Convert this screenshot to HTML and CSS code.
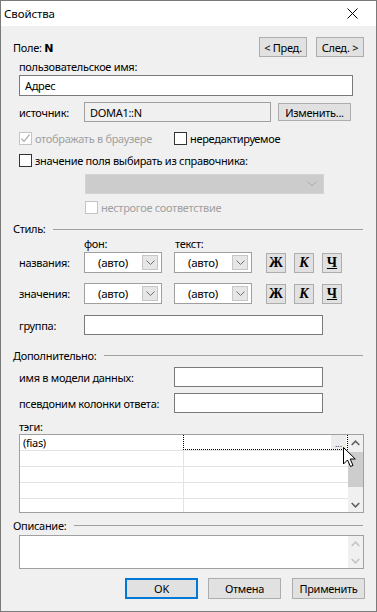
FILE: index.html
```html
<!DOCTYPE html>
<html lang="ru">

<head>
    <meta charset="UTF-8">
    <title>Свойства</title>
    <link rel="stylesheet" href="styles.css">
</head>

<body>
    <div class="window">
        <div class="titlebar">
            <span class="title">Свойства</span>
            <svg class="close" width="11" height="11" viewBox="0 0 11 11">
                <path d="M0.5 0.5 L10.5 10.5 M10.5 0.5 L0.5 10.5" stroke="#000" stroke-width="1" fill="none" />
            </svg>
        </div>

        <div class="content">
            <!-- верхняя строка: имя поля и навигация -->
            <div class="field-row">
                <span>Поле: <b class="field-name">N</b></span>
                <span class="nav">
                    <span class="btn nav-btn">&lt; Пред.</span>
                    <span class="btn nav-btn">След. &gt;</span>
                </span>
            </div>

            <div class="lbl-row indent">пользовательское имя:</div>
            <div class="edit name-edit">Адрес</div>

            <div class="src-row indent">
                <span class="lbl">источник:</span>
                <span class="edit src-edit">DOMA1::N</span>
                <span class="btn change-btn">Изменить...</span>
            </div>

            <div class="cb-row indent">
                <span class="cb-group">
                    <span class="cb disabled">
                        <svg width="11" height="11" viewBox="0 0 11 11">
                            <path d="M1.5 5.5 L4 8.5 L9.5 1.5" stroke="#b4b4b4" stroke-width="1.3" fill="none" />
                        </svg>
                    </span>
                    <span class="grey">отображать в браузере</span>
                </span>
                <span class="cb"></span>
                <span>нередактируемое</span>
            </div>

            <div class="cb-row cb-row2 indent">
                <span class="cb"></span>
                <span>значение поля выбирать из справочника:</span>
            </div>

            <div class="combo-off">
                <svg width="10" height="6" viewBox="0 0 10 6">
                    <path d="M0.5 0.5 L5 5 L9.5 0.5" stroke="#a8a8a8" stroke-width="1" fill="none" />
                </svg>
            </div>

            <div class="cb-row cb-row3">
                <span class="cb disabled"></span>
                <span class="grey">нестрогое соответствие</span>
            </div>

            <!-- Стиль -->
            <div class="section sec-style">
                <span>Стиль:</span>
                <span class="sec-line"></span>
            </div>

            <div class="colhead">
                <span class="colhead-bg">фон:</span>
                <span>текст:</span>
            </div>

            <div class="style-row indent">
                <span class="lbl">названия:</span>
                <span class="combo">(авто)<span class="drop"><svg width="9" height="5" viewBox="0 0 9 5"><path d="M0.5 0.5 L4.5 4.5 L8.5 0.5" stroke="#707070" fill="none" /></svg></span></span>
                <span class="combo combo2">(авто)<span class="drop"><svg width="9" height="5" viewBox="0 0 9 5"><path d="M0.5 0.5 L4.5 4.5 L8.5 0.5" stroke="#707070" fill="none" /></svg></span></span>
                <span class="fmt fmt-first"><b>Ж</b></span>
                <span class="fmt"><b><i>К</i></b></span>
                <span class="fmt"><b><u>Ч</u></b></span>
            </div>

            <div class="style-row style-row2 indent">
                <span class="lbl">значения:</span>
                <span class="combo">(авто)<span class="drop"><svg width="9" height="5" viewBox="0 0 9 5"><path d="M0.5 0.5 L4.5 4.5 L8.5 0.5" stroke="#707070" fill="none" /></svg></span></span>
                <span class="combo combo2">(авто)<span class="drop"><svg width="9" height="5" viewBox="0 0 9 5"><path d="M0.5 0.5 L4.5 4.5 L8.5 0.5" stroke="#707070" fill="none" /></svg></span></span>
                <span class="fmt fmt-first"><b>Ж</b></span>
                <span class="fmt"><b><i>К</i></b></span>
                <span class="fmt"><b><u>Ч</u></b></span>
            </div>

            <div class="group-row indent">
                <span class="lbl">группа:</span>
                <span class="edit group-edit"></span>
            </div>

            <!-- Дополнительно -->
            <div class="section sec-extra">
                <span>Дополнительно:</span>
                <span class="sec-line"></span>
            </div>

            <div class="extra-row indent">
                <span class="lbl-wide">имя в модели данных:</span>
                <span class="edit extra-edit"></span>
            </div>
            <div class="extra-row extra-row2 indent">
                <span class="lbl-wide">псевдоним колонки ответа:</span>
                <span class="edit extra-edit"></span>
            </div>

            <div class="lbl-row tags-lbl indent">тэги:</div>
            <div class="grid">
                <div class="grid-rows">
                    <div class="grow">
                        <span class="gcell">(fias)</span>
                        <span class="gcell gcell2 focus"><span class="ell">...</span></span>
                    </div>
                    <div class="grow"><span class="gcell"></span><span class="gcell gcell2"></span></div>
                    <div class="grow"><span class="gcell"></span><span class="gcell gcell2"></span></div>
                    <div class="grow"><span class="gcell"></span><span class="gcell gcell2"></span></div>
                    <div class="grow"><span class="gcell"></span><span class="gcell gcell2"></span></div>
                </div>
                <div class="vscroll">
                    <span class="arrow">
                        <svg width="9" height="6" viewBox="0 0 9 6"><path d="M0.7 5 L4.5 1.2 L8.3 5" stroke="#606060" stroke-width="1.6" fill="none" /></svg>
                    </span>
                    <span class="thumb"></span>
                    <span class="arrow arrow-down">
                        <svg width="9" height="6" viewBox="0 0 9 6"><path d="M0.7 1 L4.5 4.8 L8.3 1" stroke="#606060" stroke-width="1.6" fill="none" /></svg>
                    </span>
                </div>
                <!-- указатель мыши поверх кнопки "..." -->
                <svg class="cursor" width="13" height="21" viewBox="0 0 13 21">
                    <path d="M0.5 0.5 L0.5 17 L4.5 13 L7.5 19.5 L10 18.4 L7.2 12 L12.3 12 Z" fill="#fff" stroke="#000" stroke-width="1" />
                </svg>
            </div>

            <!-- Описание -->
            <div class="section sec-desc">
                <span>Описание:</span>
                <span class="sec-line"></span>
            </div>
            <div class="desc">
                <div class="vscroll desc-scroll">
                    <span class="arrow">
                        <svg width="9" height="6" viewBox="0 0 9 6"><path d="M0.7 5 L4.5 1.2 L8.3 5" stroke="#c4c4c4" stroke-width="1.6" fill="none" /></svg>
                    </span>
                    <span class="arrow">
                        <svg width="9" height="6" viewBox="0 0 9 6"><path d="M0.7 1 L4.5 4.8 L8.3 1" stroke="#c4c4c4" stroke-width="1.6" fill="none" /></svg>
                    </span>
                </div>
            </div>

            <div class="buttons">
                <span class="btn dlg-btn default">OK</span>
                <span class="btn dlg-btn">Отмена</span>
                <span class="btn dlg-btn">Применить</span>
            </div>
        </div>
    </div>
</body>

</html>
```

FILE: styles.css
```css
* {
    box-sizing: border-box;
}

body {
    margin: 0;
    font-family: "Noto Sans", "Open Sans", sans-serif;
    font-size: 11px;
    letter-spacing: -0.3px;
    color: #000;
    background: #fff;
}

.window {
    width: 377px;
    height: 612px;
    border: 1px solid #7a7a7a;
    background: #f0f0f0;
    overflow: hidden;
}

.titlebar {
    height: 25px;
    background: #fff;
    display: flex;
    align-items: center;
    justify-content: space-between;
    padding: 0 18px 0 3px;
}

.title {
    font-size: 11.5px;
    letter-spacing: -0.1px;
}

.content {
    padding: 0 12px 0 11px;
    white-space: nowrap;
}

.indent {
    padding-left: 7px;
}

.grey {
    color: #a0a0a0;
}

/* общие контролы */
.btn {
    display: inline-flex;
    align-items: center;
    justify-content: center;
    background: #e1e1e1;
    border: 1px solid #adadad;
}

.edit {
    display: flex;
    align-items: center;
    background: #fff;
    border: 1px solid #7a7a7a;
    padding-left: 5px;
}

.cb {
    width: 13px;
    height: 13px;
    border: 1px solid #333;
    background: #fff;
    display: inline-flex;
    align-items: center;
    justify-content: center;
    margin-right: 3px;
    flex: none;
}

.cb.disabled {
    border-color: #c4c4c4;
}

.lbl {
    width: 65px;
    flex: none;
}

.lbl-wide {
    width: 155px;
    flex: none;
}

/* строки */
.field-row {
    margin-top: 11px;
    height: 20px;
    display: flex;
    align-items: center;
    justify-content: space-between;
    padding-left: 1px;
}

.field-name {
    font-family: "DejaVu Sans", sans-serif;
    font-size: 11px;
}

.nav {
    display: flex;
    gap: 9px;
}

.nav-btn {
    width: 48px;
    height: 20px;
}

.lbl-row {
    margin-top: 1px;
    height: 16px;
    display: flex;
    align-items: center;
}

.name-edit {
    margin-left: 7px;
    margin-top: 1px;
    width: 334px;
    height: 21px;
}

.src-row {
    margin-top: 6px;
    height: 20px;
    display: flex;
    align-items: center;
}

.src-edit {
    width: 187px;
    height: 20px;
    background: #f0f0f0;
    border-color: #a0a0a0;
}

.change-btn {
    margin-left: 7px;
    width: 73px;
    height: 18px;
}

.cb-row {
    margin-top: 8px;
    height: 16px;
    display: flex;
    align-items: center;
}

.cb-row2 {
    margin-top: 6px;
}

.cb-row3 {
    margin-top: 5px;
    padding-left: 73px;
}

.cb-group {
    width: 155px;
    display: flex;
    align-items: center;
}

.combo-off {
    margin: 6px 0 0 73px;
    width: 239px;
    height: 20px;
    background: #cccccc;
    border: 1px solid #d4d4d4;
    display: flex;
    align-items: center;
    justify-content: flex-end;
    padding-right: 6px;
}

/* секции с линией */
.section {
    height: 15px;
    display: flex;
    align-items: center;
    padding-left: 1px;
}

.sec-line {
    flex: 1;
    height: 1px;
    background: #a0a0a0;
    margin: 1px 1px 0 8px;
}

.sec-style {
    margin-top: 6px;
}

.sec-extra {
    margin-top: 12px;
    height: 16px;
}

.sec-desc {
    margin-top: 4px;
    height: 16px;
}

.colhead {
    height: 14px;
    display: flex;
    align-items: center;
    padding-left: 72px;
}

.colhead-bg {
    width: 91px;
}

.style-row {
    margin-top: 2px;
    height: 21px;
    display: flex;
    align-items: center;
}

.style-row2 {
    margin-top: 10px;
}

.combo {
    width: 78px;
    height: 21px;
    background: #fff;
    border: 1px solid #a0a0a0;
    display: flex;
    align-items: center;
    padding-left: 13px;
    position: relative;
    font-size: 11.5px;
}

.combo2 {
    margin-left: 12px;
}

.drop {
    position: absolute;
    right: 3px;
    top: 2px;
    width: 16px;
    height: 15px;
    background: #e6e6e6;
    border: 1px solid #c6c6c6;
    display: flex;
    align-items: center;
    justify-content: center;
}

.fmt {
    width: 20px;
    height: 20px;
    margin-left: 8px;
    background: #e1e1e1;
    border: 1px solid #adadad;
    display: flex;
    align-items: center;
    justify-content: center;
    font-family: "Liberation Serif", "DejaVu Serif", serif;
    font-size: 14px;
    letter-spacing: 0;
}

.fmt-first {
    margin-left: 14px;
}

.group-row {
    margin-top: 11px;
    height: 20px;
    display: flex;
    align-items: center;
}

.group-edit {
    width: 239px;
    height: 20px;
}

.extra-row {
    margin-top: 4px;
    height: 20px;
    display: flex;
    align-items: center;
}

.extra-row2 {
    margin-top: 6px;
}

.extra-edit {
    width: 149px;
    height: 20px;
}

.tags-lbl {
    margin-top: 5px;
}

/* таблица тэгов */
.grid {
    margin-left: 7px;
    width: 345px;
    height: 79px;
    border: 1px solid #a0a0a0;
    background: #fff;
    display: flex;
    position: relative;
    overflow: hidden;
}

.grid-rows {
    width: 328px;
}

.grow {
    height: 16px;
    display: flex;
    border-bottom: 1px solid #e3e3e3;
}

.gcell {
    width: 163px;
    padding-left: 3px;
    display: flex;
    align-items: center;
    line-height: 15px;
}

.gcell2 {
    width: 165px;
    border-left: 1px solid #e3e3e3;
    justify-content: flex-end;
    padding: 0;
}

.focus {
    border: 1px dotted #000;
    margin-top: -1px;
    height: 16px;
    padding-right: 1px;
}

.ell {
    width: 15px;
    height: 14px;
    background: #ececec;
    display: flex;
    align-items: flex-end;
    justify-content: center;
    font-size: 9px;
    line-height: 11px;
    letter-spacing: 0;
    color: #333;
}

.vscroll {
    width: 15px;
    background: #f0f0f0;
    display: flex;
    flex-direction: column;
    align-items: center;
}

.arrow {
    height: 16px;
    width: 15px;
    display: flex;
    align-items: center;
    justify-content: center;
    flex: none;
}

.thumb {
    width: 15px;
    height: 35px;
    margin-top: 1px;
    background: #cdcdcd;
}

.arrow-down {
    margin-top: auto;
    height: 15px;
}

.cursor {
    position: absolute;
    left: 323px;
    top: 12px;
}

/* описание */
.desc {
    margin: 2px 0 0 7px;
    width: 345px;
    height: 34px;
    border: 1px solid #a0a0a0;
    background: #fff;
    display: flex;
    justify-content: flex-end;
}

.desc-scroll {
    justify-content: space-between;
}

.desc-scroll .arrow {
    height: 15px;
}

.buttons {
    margin-top: 9px;
    margin-right: -1px;
    display: flex;
    justify-content: flex-end;
    gap: 10px;
}

.dlg-btn {
    width: 73px;
    height: 21px;
}

.dlg-btn:last-child {
    margin-left: 1px;
}

.default {
    border: 2px solid #0078d7;
}
```
